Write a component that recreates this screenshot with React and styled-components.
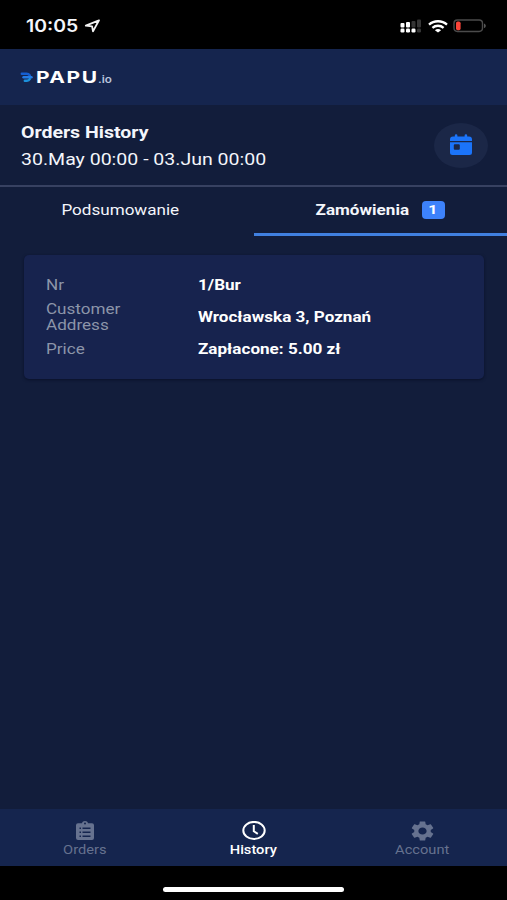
import React from "react";
import styled, { createGlobalStyle } from "styled-components";
import { MdSettings } from "react-icons/md";

const GlobalStyle = createGlobalStyle`
  * {
    box-sizing: border-box;
  }

  body {
    margin: 0;
    background: #000;
    font-family: Roboto, "Liberation Sans", sans-serif;
    color: #f4f6fb;
  }
`;

const Screen = styled.div`
  display: flex;
  flex-direction: column;
  width: 507px;
  height: 900px;
  overflow: hidden;
  background: #121d3b;
`;

/* wide lettering, used for every label in the app */
const Wide = styled.span`
  display: inline-block;
  white-space: nowrap;
  transform: scaleX(${(p) => p.$x || 1.22});
  transform-origin: ${(p) => p.$origin || "left"} center;
`;

const StatusBar = styled.div`
  display: flex;
  flex: none;
  justify-content: space-between;
  height: 49px;
  padding: 0 20px 0 26px;
  background: #000;
`;

const Clock = styled.div`
  display: flex;
  align-items: center;
  height: 52px;
  font-family: Inter, sans-serif;
  font-size: 17px;
  font-weight: 600;

  span {
    width: 58px;
  }
`;

const StatusIcons = styled.div`
  display: flex;
  align-items: center;
  height: 52px;
`;

const Wifi = styled.svg`
  margin: 0 5px 0 7px;
`;

const Header = styled.header`
  display: flex;
  flex: none;
  align-items: center;
  height: 56px;
  padding: 0 20px;
  background: #15254e;
`;

const LogoMark = styled.svg`
  margin-right: 2px;
`;

const LogoName = styled.div`
  width: 62px;
  font-family: Inter, sans-serif;
  font-size: 16.5px;
  font-weight: 700;
  line-height: 16px;
  letter-spacing: 1.2px;
  color: #fff;
`;

const LogoSuffix = styled.div`
  padding-top: 4px;
  font-family: Inter, sans-serif;
  font-size: 10px;
  font-weight: 600;
  line-height: 12px;
  color: #b9c4dc;
`;

const Summary = styled.section`
  display: flex;
  flex: none;
  justify-content: space-between;
  align-items: center;
  height: 82px;
  padding: 0 19px 0 21px;
  border-bottom: 2px solid #374161;
`;

const Title = styled.h1`
  margin: 0;
  padding-top: 1px;
  font-size: 16px;
  font-weight: 700;
  line-height: 27px;
`;

const Period = styled.p`
  margin: 0;
  font-size: 16px;
  line-height: 27px;
`;

const DateButton = styled.button`
  display: flex;
  align-items: center;
  justify-content: center;
  width: 54px;
  height: 45px;
  padding: 0;
  border: 0;
  border-radius: 50%;
  background: #1b2747;
  color: #1b74fa;
`;

const Tabs = styled.nav`
  display: flex;
  flex: none;
  height: 49px;
`;

const Tab = styled.div`
  display: flex;
  width: 50%;
  align-items: center;
  justify-content: center;
  gap: 21px;
  padding: ${(p) => (p.$active ? "0 0 0 8px" : "0 12px 3px 0")};
  border-bottom: ${(p) => (p.$active ? "3px solid #4080e0" : "0")};
  font-size: 14px;
  font-weight: ${(p) => (p.$active ? 700 : 400)};
`;

const Badge = styled.span`
  width: 23px;
  height: 18px;
  border-radius: 4px;
  background: #3d82fb;
  color: #fff;
  font-size: 13px;
  line-height: 18px;
  text-align: center;
`;

const Content = styled.main`
  flex: 1;
  padding: 19px 23px 0 24px;
`;

const Card = styled.dl`
  display: grid;
  grid-template-columns: 152px 1fr;
  align-items: center;
  align-content: start;
  row-gap: 8px;
  height: 124px;
  margin: 0;
  padding: 22px;
  border-radius: 5px;
  background: #17234e;
  box-shadow: 0 1px 3px rgba(4, 10, 30, 0.6);
  font-size: 14px;
  line-height: 16px;
`;

const Label = styled.dt`
  color: #8c95a9;
`;

const Value = styled.dd`
  margin: 0;
  font-weight: 700;
  color: #fff;
`;

const BottomNav = styled.nav`
  display: grid;
  flex: none;
  grid-template-columns: repeat(3, 1fr);
  height: 57px;
  background: #15254e;
`;

const NavItem = styled.div`
  display: flex;
  flex-direction: column;
  align-items: center;
  padding-top: 12px;
  color: ${(p) => (p.$active ? "#fff" : "#66728f")};
  font-size: 12px;
  font-weight: ${(p) => (p.$active ? 500 : 400)};
  line-height: 16px;

  svg {
    margin-bottom: 1px;
  }
`;

const GearIcon = styled(MdSettings)`
  width: 23px;
  height: 20px;
`;

const HomeArea = styled.div`
  display: flex;
  flex: none;
  justify-content: center;
  height: 34px;
  padding-top: 21px;
  background: #000;
`;

const HomeIndicator = styled.div`
  width: 181px;
  height: 5px;
  border-radius: 3px;
  background: #fff;
`;

const LocationIcon = () => (
  <svg width="17" height="14" viewBox="0 0 17 14" fill="none">
    <path
      d="M15 1.3 1.8 6.7l6.3.6.9 5.1z"
      stroke="#f4f4f4"
      strokeWidth="1.8"
      strokeLinejoin="round"
    />
  </svg>
);

const SignalIcon = () => (
  <svg width="21" height="14" viewBox="0 0 21 14">
    <g fill="#fff">
      <rect x="0.5" y="4" width="4" height="4.5" rx="1" />
      <rect x="6" y="3" width="4" height="5.5" rx="1" />
      <rect x="0.5" y="9.5" width="4" height="4" rx="1.2" />
      <rect x="6" y="9.5" width="4" height="4" rx="1.2" />
      <rect x="11.5" y="9.5" width="4" height="4" rx="1.2" />
    </g>
    <g fill="#353535">
      <rect x="11.5" y="2" width="4" height="6.5" rx="1" />
      <rect x="17" y="0.5" width="4" height="8" rx="1" />
      <rect x="17" y="9.5" width="4" height="4" rx="1.2" />
    </g>
  </svg>
);

const WifiIcon = () => (
  <Wifi width="20" height="13" viewBox="0 0 20 13" fill="none" stroke="#fff" strokeWidth="2.3">
    <path d="M1 4.6C6 .1 14 .1 19 4.6" />
    <path d="M4.4 7.9c3.2-2.9 8-2.9 11.2 0" />
    <path d="M10 12.6 6.9 10.2c1.7-1.5 4.5-1.5 6.2 0z" fill="#fff" stroke="none" />
  </Wifi>
);

const BatteryIcon = () => (
  <svg width="34" height="14" viewBox="0 0 34 14">
    <rect x="1" y="1" width="28.5" height="11.5" rx="3.4" fill="none" stroke="#4b4b4b" strokeWidth="1.4" />
    <rect x="3" y="2.5" width="4.6" height="8.8" rx="1.7" fill="#fb4438" />
    <path d="M31 4.5c2.4.8 2.4 4 0 4.6z" fill="#555" />
  </svg>
);

const Logo = () => (
  <>
    <LogoMark width="14" height="11" viewBox="0 0 14 11" fill="none" strokeWidth="2.4" strokeLinecap="round">
      <path d="M1.8 1.8h4.8q2 0 3.2 1.7" stroke="#165fd0" />
      <path d="M3.5 5.2h8" stroke="#247ce5" />
      <path d="M4.8 8.7h2.2q2 0 2.8-1.7" stroke="#1c91dc" />
    </LogoMark>
    <LogoName>
      <Wide $x={1.27}>PAPU</Wide>
    </LogoName>
    <LogoSuffix>
      <Wide $x={1.17}>.io</Wide>
    </LogoSuffix>
  </>
);

const CalendarIcon = () => (
  <svg width="22" height="22" viewBox="0 0 22 22" fill="currentColor">
    <path d="M4.8 2.5V1.5a1.3 1.3 0 0 1 2.6 0v1h7.2v-1a1.3 1.3 0 0 1 2.6 0v1h1.8a3 3 0 0 1 3 3V7H0V5.5a3 3 0 0 1 3-3z" />
    <path
      fillRule="evenodd"
      d="M0 8.3h22V18.5a2.5 2.5 0 0 1-2.5 2.5h-17A2.5 2.5 0 0 1 0 18.5zM4.800 10.300a1 1 0 0 0-1 1v3.400a1 1 0 0 0 1 1h4a1 1 0 0 0 1-1v-3.400a1 1 0 0 0-1-1z"
    />
  </svg>
);

const ClipboardIcon = () => (
  <svg width="18" height="20" viewBox="0 0 18 20">
    <path
      fill="currentColor"
      fillRule="evenodd"
      d="M2 2.2h4C6.3 .9 7.5 0 9 0s2.7.9 3 2.2h4a2 2 0 0 1 2 2V17a2 2 0 0 1-2 2H2a2 2 0 0 1-2-2V4.2a2 2 0 0 1 2-2zM9 1.5a1 1 0 1 0 0 2 1 1 0 0 0 0-2zM3.5 6.5v1.5H5V6.5zm3 0v1.5h8V6.5zm-3 4V12H5v-1.5zm3 0V12h8v-1.5zm-3 4V16H5v-1.5zm3 0V16h8v-1.5z"
    />
  </svg>
);

const HistoryIcon = () => (
  <svg width="24" height="20" viewBox="0 0 24 20" fill="none" stroke="currentColor">
    <ellipse cx="12" cy="9.5" rx="10.7" ry="8.6" strokeWidth="2" />
    <path d="M11.8 4v6.3l4 2.5" strokeWidth="2" />
  </svg>
);

const orderRows = [
  { label: ["Nr"], value: "1/Bur" },
  { label: ["Customer", "Address"], value: "Wrocławska 3, Poznań" },
  { label: ["Price"], value: "Zapłacone: 5.00 zł" },
];

const navItems = [
  { text: "Orders", icon: <ClipboardIcon /> },
  { text: "History", icon: <HistoryIcon />, active: true },
  { text: "Account", icon: <GearIcon preserveAspectRatio="none" viewBox="2 2 20 20" /> },
];

const App = () => {
  return (
    <>
      <GlobalStyle />
      <Screen>
        <StatusBar>
          <Clock>
            <Wide $x={1.14}>10:05</Wide>
            <LocationIcon />
          </Clock>
          <StatusIcons>
            <SignalIcon />
            <WifiIcon />
            <BatteryIcon />
          </StatusIcons>
        </StatusBar>

        <Header>
          <Logo />
        </Header>

        <Summary>
          <div>
            <Title>
              <Wide>Orders History</Wide>
            </Title>
            <Period>
              <Wide>30.May 00:00 - 03.Jun 00:00</Wide>
            </Period>
          </div>
          <DateButton aria-label="Date range">
            <CalendarIcon />
          </DateButton>
        </Summary>

        <Tabs>
          <Tab>
            <Wide $origin="center">Podsumowanie</Wide>
          </Tab>
          <Tab $active>
            <Wide $origin="center">Zamówienia</Wide>
            <Badge>
              <Wide $origin="center">1</Wide>
            </Badge>
          </Tab>
        </Tabs>

        <Content>
          <Card>
            {orderRows.map((row) => (
              <React.Fragment key={row.value}>
                <Label>
                  {row.label.map((line) => (
                    <div key={line}>
                      <Wide>{line}</Wide>
                    </div>
                  ))}
                </Label>
                <Value>
                  <Wide>{row.value}</Wide>
                </Value>
              </React.Fragment>
            ))}
          </Card>
        </Content>

        <BottomNav>
          {navItems.map((item) => (
            <NavItem key={item.text} $active={item.active}>
              {item.icon}
              <Wide $origin="center">{item.text}</Wide>
            </NavItem>
          ))}
        </BottomNav>
        <HomeArea>
          <HomeIndicator />
        </HomeArea>
      </Screen>
    </>
  );
};

export default App;
